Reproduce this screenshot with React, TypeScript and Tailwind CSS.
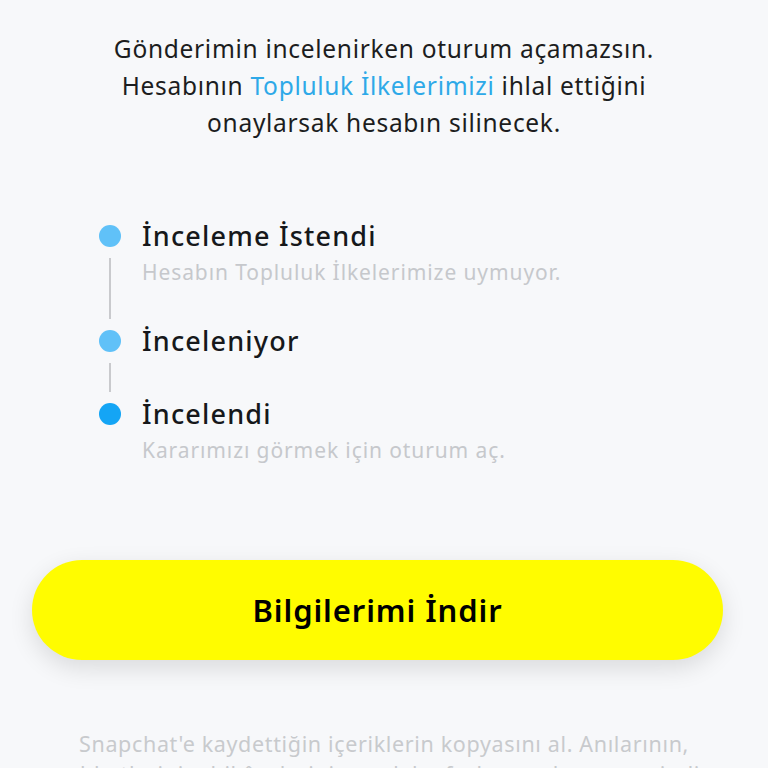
const FONT = "font-['Noto_Sans',sans-serif]";

type Step = { title: string; subtitle?: string; dot: string; line: boolean };

const STEPS: Step[] = [
  { title: 'İnceleme İstendi', subtitle: 'Hesabın Topluluk İlkelerimize uymuyor.', dot: 'bg-[#60c1f8]', line: true },
  { title: 'İnceleniyor', dot: 'bg-[#60c1f8]', line: true },
  { title: 'İncelendi', subtitle: 'Kararımızı görmek için oturum aç.', dot: 'bg-[#14a5f5]', line: false },
];

function TimelineStep({ step }: { step: Step }) {
  return (
    <div className="flex">
      {/* sol sütun: nokta + çizgi */}
      <div className="flex w-[22px] flex-col items-center">
        <div className="flex h-[34px] items-center">
          <span className={`block h-[22px] w-[22px] rounded-full ${step.dot}`} />
        </div>
        {step.line && <div className="mb-[5px] mt-[5px] w-[2px] flex-1 bg-[#c9cacd]" />}
      </div>
      <div className={`ml-[21px] flex flex-col ${step.line ? (step.subtitle ? 'pb-[38px]' : 'pb-[39px]') : ''}`}>
        <span className="text-[27px] font-medium leading-[34px] tracking-[1.2px] text-[#16181b]">{step.title}</span>
        {step.subtitle && (
          <span className="mt-[5px] text-[21px] leading-[28px] tracking-[0.9px] text-[#c6c8cc]">{step.subtitle}</span>
        )}
      </div>
    </div>
  );
}

export default function App() {
  return (
    <div className={`h-[768px] overflow-hidden bg-[#f7f8fa] ${FONT}`}>
      <div className="pt-[30px]">
        <p className="text-center text-[24.5px] leading-[37px] tracking-[0.7px] text-[#1c1d20]">
          Gönderimin incelenirken oturum açamazsın.
          <br />
          Hesabının <span className="text-[#2ea9e8]">Topluluk İlkelerimizi</span> ihlal ettiğini
          <br />
          onaylarsak hesabın silinecek.
        </p>
      </div>

      <div className="mt-[78px] flex flex-col pl-[99px]">
        {STEPS.map((s) => (
          <TimelineStep key={s.title} step={s} />
        ))}
      </div>

      <div className="ml-[32px] mr-[45px] mt-[96px]">
        <button className="flex h-[100px] w-full items-center justify-center rounded-full bg-[#fffc00] shadow-[0_8px_24px_rgba(0,0,0,0.12)]">
          <span className="text-[31px] font-semibold tracking-[0.9px] text-black">Bilgilerimi İndir</span>
        </button>
      </div>

      <p className="mx-auto mt-[69px] w-[700px] text-center text-[21.5px] leading-[30px] tracking-[0.65px] text-[#c8cacd]">
        Snapchat'e kaydettiğin içeriklerin kopyasını al. Anılarının,
        <br />
        sohbetlerinin, hikâyelerinin ve daha fazlasının kopyasını indir.
      </p>
    </div>
  );
}
